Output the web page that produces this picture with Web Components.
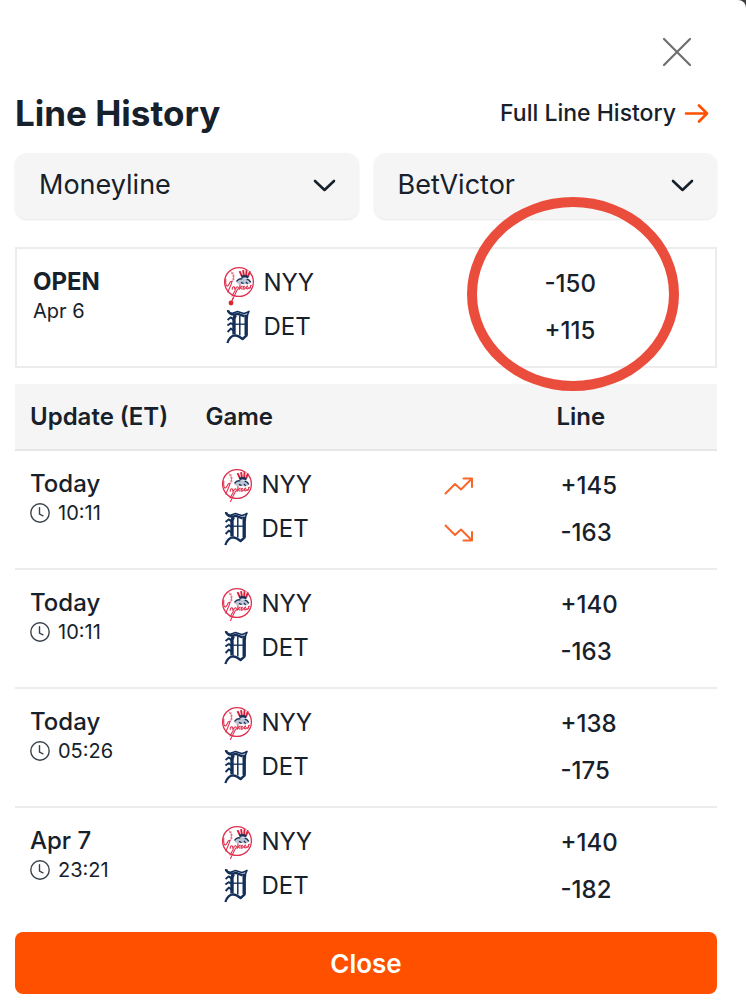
<!DOCTYPE html>
<html lang="en">
<head>
<meta charset="utf-8">
<title>Line History</title>
<style>
    body {
        margin: 0;
        background: #3d3d3d;
        color: #17212b;
        font-family: Inter, 'Liberation Sans', sans-serif;
        font-size: 24px;
    }
</style>
</head>
<body>
<line-history-modal heading="Line History">
    <a-link slot="link" href="#history">Full Line History</a-link>
    <filter-select slot="filters" label="Market" value="Moneyline"></filter-select>
    <filter-select slot="filters" label="Sportsbook" value="BetVictor"></filter-select>
    <opening-line date="Apr 6" away="-150" home="+115"></opening-line>
    <line-table></line-table>
</line-history-modal>

<script>
const modal_template = document.createElement('template');
modal_template.innerHTML = `
    <style>
        :host {
            display: block;
            box-sizing: border-box;
            min-height: 100vh;
            padding: 32px 29px 5px 15px;
            background: #fff;
            border-top-right-radius: 8px;
        }
        .top {
            display: flex;
            justify-content: flex-end;
            padding-right: 20px;
        }
        .dismiss {
            width: 40px;
            height: 40px;
            padding: 0;
            border: 0;
            background: none;
            cursor: pointer;
        }
        .dismiss svg {
            display: block;
        }
        .title {
            display: flex;
            align-items: center;
            justify-content: space-between;
            height: 81px;
            padding-right: 8px;
        }
        h1 {
            margin: 0;
            font-size: 35px;
            font-weight: 700;
        }
        .filters {
            display: grid;
            grid-template-columns: 1fr 1fr;
            gap: 15px;
            margin-bottom: 28px;
        }
        .close {
            display: block;
            width: 100%;
            height: 62px;
            margin-top: 5px;
            border: 0;
            border-radius: 8px;
            background: #ff5000;
            color: #fff;
            font: 600 26px Inter, 'Liberation Sans', sans-serif;
            cursor: pointer;
        }
    </style>
    <div class="top">
        <button class="dismiss" aria-label="Dismiss">
            <svg width="40" height="40" fill="none" stroke="#6f6f6f" stroke-width="2.2" stroke-linecap="round">
                <path d="M7 7 33 33M33 7 7 33"/>
            </svg>
        </button>
    </div>
    <div class="title"><h1></h1><slot name="link"></slot></div>
    <div class="filters"><slot name="filters"></slot></div>
    <slot></slot>
    <button class="close">Close</button>
`

class LineHistoryModal extends HTMLElement {
    constructor() {
        super();
        this.attachShadow({mode: 'open'});
        this.shadowRoot.appendChild(modal_template.content.cloneNode(true));
    }

    connectedCallback() {
        this.shadowRoot.querySelector('h1').textContent = this.getAttribute('heading');
    }
}
window.customElements.define('line-history-modal', LineHistoryModal)

class ArrowLink extends HTMLElement {
    constructor() {
        super();
        this.attachShadow({mode: 'open'});
    }

    connectedCallback() {
        this.shadowRoot.innerHTML = `
            <style>
                :host { display: block; }
                a {
                    display: flex;
                    align-items: center;
                    gap: 8px;
                    color: inherit;
                    font-size: 23px;
                    font-weight: 500;
                    text-decoration: none;
                }
            </style>
            <a href="${this.getAttribute('href')}">
                <slot></slot>
                <svg width="25" height="20" fill="none" stroke="#ff5000" stroke-width="2.6" stroke-linecap="round" stroke-linejoin="round">
                    <path d="M2 10.5H23M15 2.5 23 10.5 15 18.5"/>
                </svg>
            </a>`;
    }
}
window.customElements.define('a-link', ArrowLink)

class FilterSelect extends HTMLElement {
    constructor() {
        super();
        this.attachShadow({mode: 'open'});
    }

    connectedCallback() {
        this.shadowRoot.innerHTML = `
            <style>
                :host {
                    display: grid;
                    align-items: center;
                }
                select, svg { grid-area: 1 / 1; }
                select {
                    width: 100%;
                    height: 66px;
                    padding: 0 64px 4px 24px;
                    appearance: none;
                    border: 0;
                    border-radius: 12px;
                    background: #f5f5f5;
                    box-shadow: 0 1px 2px rgba(0, 0, 0, .1);
                    color: inherit;
                    font: 400 27px Inter, 'Liberation Sans', sans-serif;
                }
                svg {
                    justify-self: end;
                    margin-right: 22px;
                    pointer-events: none;
                }
            </style>
            <select aria-label="${this.getAttribute('label')}">
                <option>${this.getAttribute('value')}</option>
            </select>
            <svg width="25" height="16" fill="none" stroke="#17212b" stroke-width="2.6" stroke-linecap="round" stroke-linejoin="round">
                <path d="M3 3 12.5 12 22 3"/>
            </svg>`;
    }
}
window.customElements.define('filter-select', FilterSelect)

const logos = {
    NYY: `
        <g fill="none" stroke="#e0304f" stroke-linecap="round" stroke-linejoin="round">
            <circle cx="16" cy="16" r="14.4" fill="#fff" stroke-width="1.3"/>
            <path d="M7.6 5C11 8 11.5 11 9.4 16" stroke-width=".7"/>
            <path d="M8.4 7.5l2.2-.6M9.4 10l2.3-.1M9.2 12.8l2.2.3" stroke-width=".5"/>
            <path d="M14.4 23.5 9.5 33.5M12.2 24.5 9 30" stroke-width="1.1"/>
        </g>
        <path d="M15.8 5.2Q21 2.6 27.6 5.4L25.2 11.6Q21.4 9.8 18 11.2Z" fill="#fff"/>
        <g fill="none" stroke="#d4213d" stroke-width="1.9">
            <path d="M16.6 5.2 18.9 10.4M20.1 4.1 20.9 10M23.6 4.1 23.1 10M26.9 5.2 25.2 10.4"/>
        </g>
        <path d="M18 9.6Q22 8 25.8 10L25.2 12.6Q22 10.8 18.6 12.2Z" fill="#1d3158"/>
        <path d="M12.6 15.6Q14.4 11.6 20 12T28 16.6Q27 19 23 18.2T16 18.4Z" fill="#bcc6d3"/>
        <path d="M13.6 15.3Q16 12 19.4 13M23.6 13.2Q26.4 13.6 27.8 16.4M18 16.4l2.6 1.2M23 15.8l1.6 2" fill="none" stroke="#1d3158" stroke-width="1.3"/>
        <path d="M2.8 13C2.2 20 4.2 22.3 6.4 17.4C8 14.2 9.6 14.6 8 18.6L4.8 26M9.2 23.3C9.3 19.8 12.4 20 11.7 23.3M12.7 23.2C13.2 19.9 15.7 19.9 15.3 23.2M17 18.6 16.5 23.2M16.7 22 19.1 20.2M17.2 21.8 18.9 23.2M20 21.8C22.6 20.6 21.1 19 20.1 21.7C19.8 23.9 21.6 23.2 22.6 21.7M23.3 21.6C25.7 20.5 24.3 19 23.5 21.4C23.1 23.5 25 23.2 26.1 21.4M28.4 19.4C26 19.8 29 21.6 26.6 22.4"
            fill="none" stroke="#e0304f" stroke-width="1.1" stroke-linecap="round"/>`,
    DET: `
        <g fill="none" stroke="#14305a" stroke-linejoin="round">
            <path d="M4.6 0Q5 3.4 9.5 3.2L14.5 1.6 20.6 3.6Q23.4 3.2 26 1.4Q24 4.6 24.2 9" stroke-width="1.6"/>
            <path d="M5 .6Q7.4 5.4 12.6 4.4L15 3.8 21.6 6.4" stroke-width="2.4"/>
            <path d="M23.2 4.6V25" stroke-width="3.4"/>
            <path d="M12.4 5Q10.6 7.6 11 12V24.6" stroke-width="3.4"/>
            <path d="M16.8 5.4V25.6" stroke-width="1.5"/>
            <path d="M11 14.2H23" stroke-width="1.3"/>
            <path d="M4.4 33Q6.6 26 12 25.4Q15.4 25.6 19.6 29L24.2 24.8" stroke-width="2.4"/>
            <path d="M4.6 10 7.6 7.4 11 9.6M4.4 15.6 7.6 13.2 11 15M4.6 22 7.8 18.6 11 21" stroke-width="1.9"/>
        </g>`
}

class TeamLine extends HTMLElement {
    constructor() {
        super();
        this.attachShadow({mode: 'open'});
    }

    connectedCallback() {
        const team = this.getAttribute('team');
        // the opening line shows the whole bat, down to the knob
        const knob = this.hasAttribute('knob')
            ? '<path d="M10 32 8.5 36" stroke="#d9304f" stroke-width="1.2"/><circle cx="8" cy="37" r="2.4" fill="#d9262c"/>'
            : '';
        this.shadowRoot.innerHTML = `
            <style>
                :host {
                    display: flex;
                    align-items: center;
                    gap: 9px;
                    height: 44px;
                    font-size: 24px;
                }
                svg { overflow: visible; }
            </style>
            <svg width="32" height="32" aria-hidden="true">${logos[team]}${knob}</svg>
            <span>${team}</span>`;
    }
}
window.customElements.define('team-line', TeamLine)

const opening_line_template = document.createElement('template');
opening_line_template.innerHTML = `
    <style>
        :host {
            display: grid;
            grid-template-columns: 25% 50% 25%;
            position: relative;
            box-sizing: border-box;
            height: 121px;
            margin-bottom: 16px;
            border: 2px solid #ececec;
        }
        .when {
            padding: 18px 0 0 16px;
        }
        .when b {
            display: block;
            line-height: 30px;
        }
        .when span {
            display: block;
            font-size: 20px;
            line-height: 28px;
        }
        .teams {
            padding: 11px 0 0 31px;
        }
        .odds {
            padding: 11px 0 0 4px;
            font-weight: 500;
            line-height: 47px;
        }
        .marker {
            position: absolute;
            top: -52px;
            right: 36px;
            box-sizing: border-box;
            width: 212px;
            height: 194px;
            border: 10px solid #eb4d3d;
            border-radius: 50%;
            pointer-events: none;
        }
    </style>
    <div class="when"><b>OPEN</b><span></span></div>
    <div class="teams">
        <team-line team="NYY" knob></team-line>
        <team-line team="DET"></team-line>
    </div>
    <div class="odds"><div class="away"></div><div class="home"></div></div>
    <div class="marker"></div>
`

class OpeningLine extends HTMLElement {
    constructor() {
        super();
        this.attachShadow({mode: 'open'});
        this.shadowRoot.appendChild(opening_line_template.content.cloneNode(true));
    }

    connectedCallback() {
        this.shadowRoot.querySelector('.when span').textContent = this.getAttribute('date');
        this.shadowRoot.querySelector('.away').textContent = this.getAttribute('away');
        this.shadowRoot.querySelector('.home').textContent = this.getAttribute('home');
    }
}
window.customElements.define('opening-line', OpeningLine)

const updates = [
    {day: 'Today', time: '10:11', away: '+145', home: '-163', moved: true},
    {day: 'Today', time: '10:11', away: '+140', home: '-163'},
    {day: 'Today', time: '05:26', away: '+138', home: '-175'},
    {day: 'Apr 7', time: '23:21', away: '+140', home: '-182'}
]

const trend_icons = `
    <svg width="30" height="47"><path d="M1.5 31.5 11 22 17 27.5 27.5 17M19.5 16.5H28V25"/></svg>
    <svg width="30" height="47"><path d="M1.5 16.5 11 26 17 20.5 27.5 31M19.5 31.5H28V23"/></svg>`

const clock_icon = `
    <svg width="20" height="20" fill="none" stroke="#3a434c" stroke-width="1.4" stroke-linecap="round">
        <circle cx="10" cy="10" r="9.2"/><path d="M9.5 4.8V11L13 12.8"/>
    </svg>`

class LineTable extends HTMLElement {
    constructor() {
        super();
        this.attachShadow({mode: 'open'});
    }

    connectedCallback() {
        let rows = '';
        updates.map(({day, time, away, home, moved}) => {
            rows += `
                <tr>
                    <td class="when"><div class="day">${day}</div><div class="time">${clock_icon}${time}</div></td>
                    <td class="teams"><team-line team="NYY"></team-line><team-line team="DET"></team-line></td>
                    <td class="trend">${moved ? trend_icons : ''}</td>
                    <td class="odds"><div>${away}</div><div>${home}</div></td>
                </tr>`
        })
        this.shadowRoot.innerHTML = `
            <style>
                :host { display: block; }
                table {
                    width: 100%;
                    table-layout: fixed;
                    border-spacing: 0;
                }
                th {
                    box-sizing: border-box;
                    height: 67px;
                    padding: 0 0 0 15px;
                    border-bottom: 2px solid #e6e6e6;
                    background: #f5f5f5;
                    font-weight: 600;
                    text-align: left;
                    white-space: nowrap;
                }
                td {
                    box-sizing: border-box;
                    height: 119px;
                    padding: 11px 0 0 15px;
                    border-bottom: 2px solid #ececec;
                    vertical-align: top;
                }
                tr:last-child td { border-color: transparent; }
                .when { padding-top: 18px; }
                .day {
                    font-weight: 500;
                    line-height: 30px;
                }
                .time {
                    display: flex;
                    align-items: center;
                    gap: 8px;
                    font-size: 20px;
                    line-height: 28px;
                }
                .teams { padding-left: 30px; }
                .trend svg {
                    display: block;
                    fill: none;
                    stroke: #f8672a;
                    stroke-width: 2;
                    stroke-linecap: round;
                    stroke-linejoin: round;
                }
                .odds {
                    padding-left: 19px;
                    font-weight: 500;
                    line-height: 47px;
                }
            </style>
            <table>
                <colgroup>
                    <col style="width: 25%"><col style="width: 34%"><col style="width: 16%"><col style="width: 25%">
                </colgroup>
                <thead>
                    <tr><th>Update (ET)</th><th colspan="2">Game</th><th>Line</th></tr>
                </thead>
                <tbody>${rows}</tbody>
            </table>`;
    }
}
window.customElements.define('line-table', LineTable)
</script>
</body>
</html>
